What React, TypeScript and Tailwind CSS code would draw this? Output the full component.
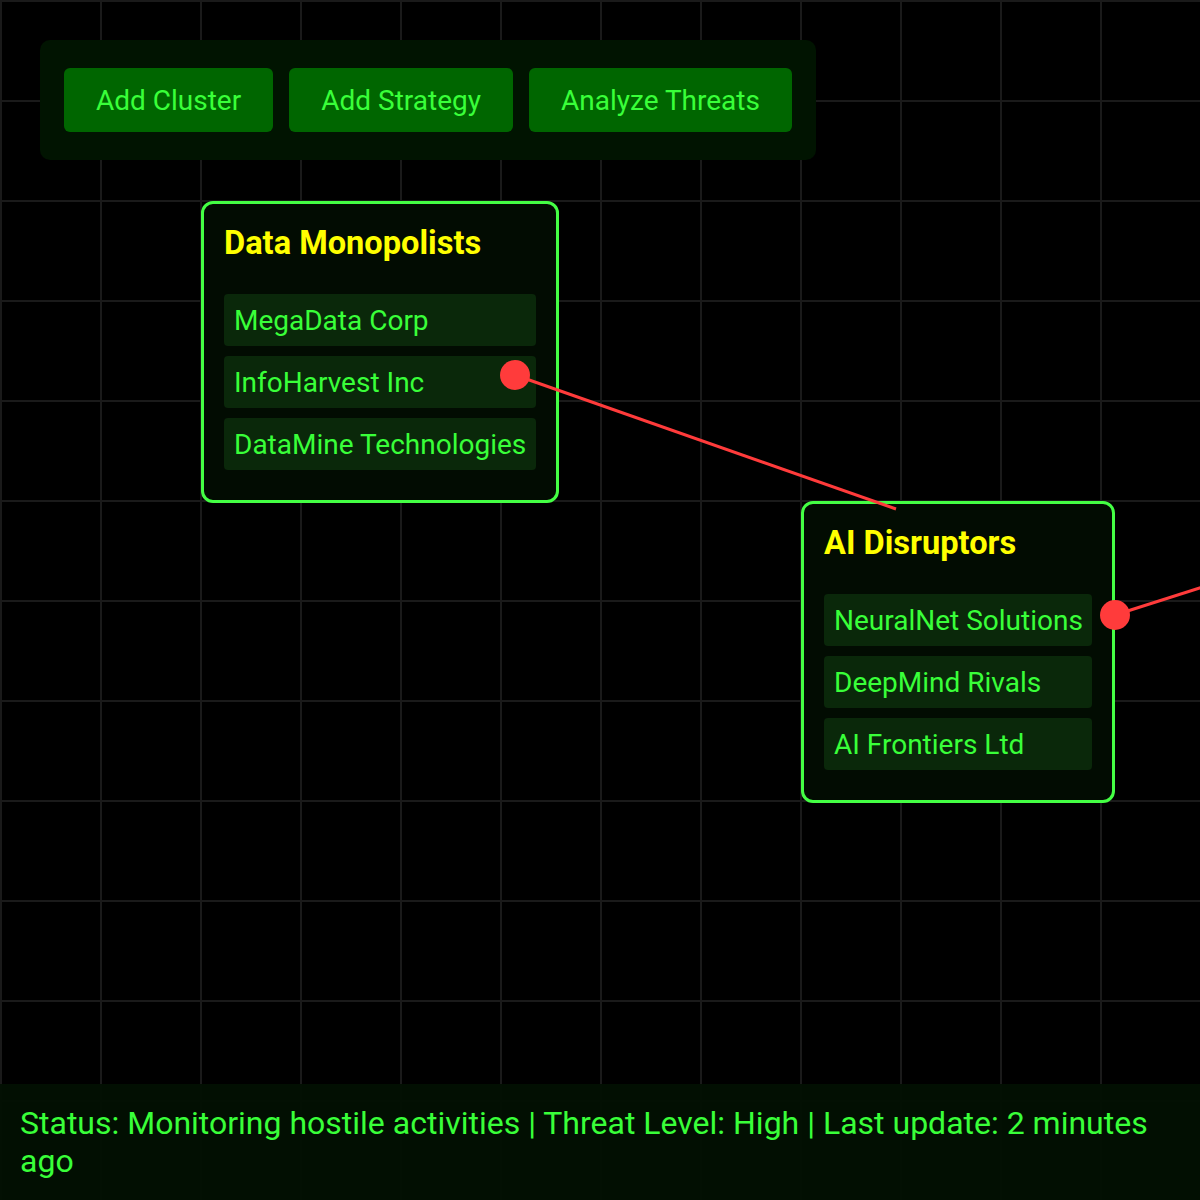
const clusters = [
  {
    title: "Data Monopolists",
    left: "left-[201px] top-[201px] w-[358px]",
    members: ["MegaData Corp", "InfoHarvest Inc", "DataMine Technologies"],
  },
  {
    title: "AI Disruptors",
    left: "left-[801px] top-[501px] w-[314px]",
    members: ["NeuralNet Solutions", "DeepMind Rivals", "AI Frontiers Ltd"],
  },
]

function ClusterNode({ title, left, members }: { title: string; left: string; members: string[] }) {
  return (
    <div className={`absolute ${left} rounded-xl border-[3px] border-[#44ff44] bg-[#020c02] p-5`}>
      <h3 className="mb-8 whitespace-nowrap pt-px text-[32.6px] font-bold leading-[37px] text-[#ffff00]">{title}</h3>
      {members.map((m) => (
        <div
          key={m}
          className="mb-[10px] whitespace-nowrap rounded bg-[#0a280a] px-[10px] pb-[9px] pt-[11px] text-[28px] leading-8 text-[#39ff39]"
        >
          {m}
        </div>
      ))}
    </div>
  )
}

export default function App() {
  return (
    <div
      className="relative h-[1200px] w-[1200px] overflow-hidden bg-black bg-[linear-gradient(#1a1a1a_2px,transparent_2px),linear-gradient(90deg,#1a1a1a_2px,transparent_2px)] bg-[size:100px_100px]"
      style={{ fontFamily: "Roboto, 'Noto Sans', sans-serif" }}
    >
      <div className="absolute left-10 top-10 flex gap-4 rounded-[10px] bg-[#011401] px-6 py-7">
        {["Add Cluster", "Add Strategy", "Analyze Threats"].map((b) => (
          <button key={b} className="rounded-md bg-[#006600] px-8 pb-[15px] pt-[17px] text-[28px] leading-8 text-[#39ff39]">
            {b}
          </button>
        ))}
      </div>

      {clusters.map((c) => (
        <ClusterNode key={c.title} {...c} />
      ))}

      <svg className="absolute inset-0" width="1200" height="1200">
        <line x1="515" y1="375" x2="896" y2="509" stroke="#ff3b3b" strokeWidth="3" />
        <line x1="1115" y1="615" x2="1300" y2="556" stroke="#ff3b3b" strokeWidth="3" />
        <circle cx="515" cy="375" r="15" fill="#ff3b3b" />
        <circle cx="1115" cy="615" r="15" fill="#ff3b3b" />
      </svg>

      <div className="absolute bottom-0 left-0 right-0 top-[1084px] bg-[#021002]/95 px-5 pt-5 text-[32px] leading-[38.4px] text-[#39ff39]">
        Status: Monitoring hostile activities | Threat Level: High | Last update: 2 minutes ago
      </div>
    </div>
  )
}
